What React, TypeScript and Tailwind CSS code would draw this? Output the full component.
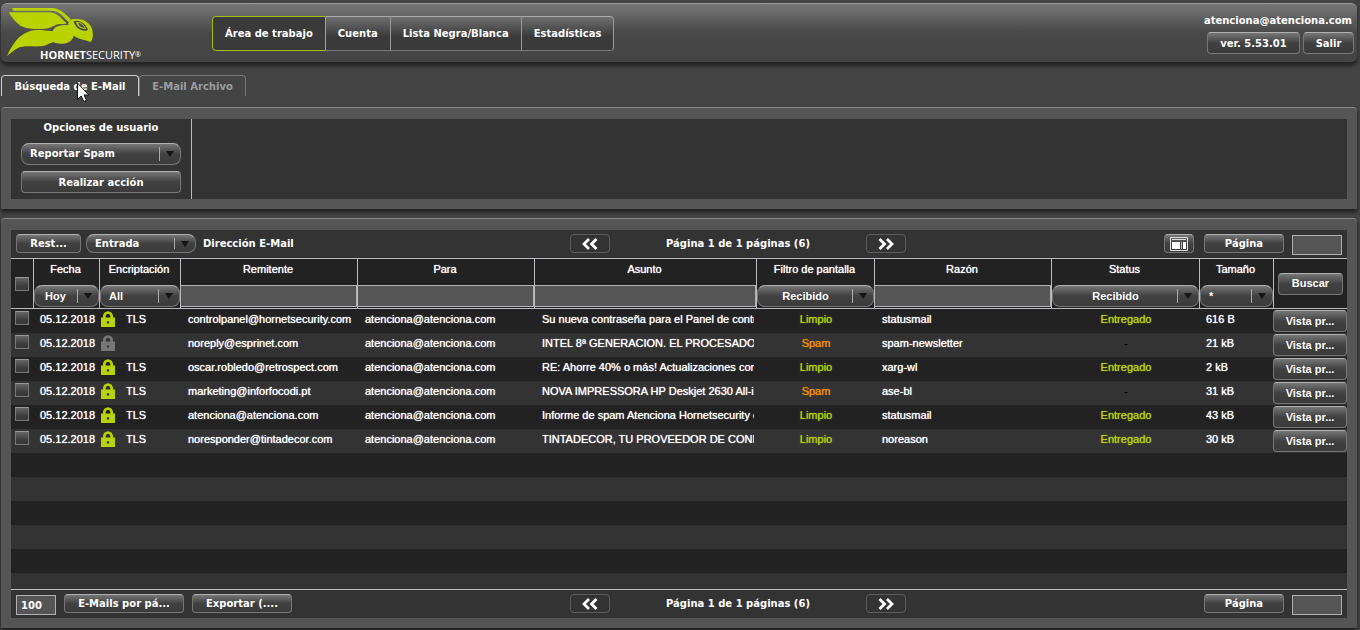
import type { ReactNode } from 'react';

type Mail = {
  tls: boolean;
  from: string;
  subject: string;
  filter: 'Limpio' | 'Spam';
  reason: string;
  delivered: boolean;
  size: string;
};

const mails: Mail[] = [
  { tls: true, from: 'controlpanel@hornetsecurity.com', subject: 'Su nueva contraseña para el Panel de contr', filter: 'Limpio', reason: 'statusmail', delivered: true, size: '616 B' },
  { tls: false, from: 'noreply@esprinet.com', subject: 'INTEL 8ª GENERACION. EL PROCESADO', filter: 'Spam', reason: 'spam-newsletter', delivered: false, size: '21 kB' },
  { tls: true, from: 'oscar.robledo@retrospect.com', subject: 'RE: Ahorre 40% o más! Actualizaciones con', filter: 'Limpio', reason: 'xarg-wl', delivered: true, size: '2 kB' },
  { tls: true, from: 'marketing@inforfocodi.pt', subject: 'NOVA IMPRESSORA HP Deskjet 2630 All-i', filter: 'Spam', reason: 'ase-bl', delivered: false, size: '31 kB' },
  { tls: true, from: 'atenciona@atenciona.com', subject: 'Informe de spam Atenciona Hornetsecurity e', filter: 'Limpio', reason: 'statusmail', delivered: true, size: '43 kB' },
  { tls: true, from: 'noresponder@tintadecor.com', subject: 'TINTADECOR, TU PROVEEDOR DE CONF', filter: 'Limpio', reason: 'noreason', delivered: true, size: '30 kB' },
];

const navItems = ['Cuenta', 'Lista Negra/Blanca', 'Estadísticas'];

const glossy =
  'rounded border border-[#777] border-t-[#b0b0b0] bg-linear-to-b from-[#777] via-[#414141] via-50% to-[#3b3b3b] font-bold text-white';
const arial = 'font-["Liberation_Sans",Arial,sans-serif] text-[11px]';
const field = 'border border-[#b0b2b4] bg-[#555] px-1 font-bold text-white outline-none';

function Button({ className, children, label }: { className: string; children: ReactNode; label?: string }) {
  return (
    <button type="button" aria-label={label} className={`${glossy} flex shrink-0 items-center justify-center whitespace-nowrap ${className}`}>
      {children}
    </button>
  );
}

type SelectProps = { label: string; value: string; className: string; textClass?: string };

function Select({ label, value, className, textClass = 'pl-2' }: SelectProps) {
  return (
    <div className={`relative shrink-0 ${className}`}>
      <select aria-label={label} className={`${glossy} block h-full w-full appearance-none rounded-lg pr-5 leading-none outline-none ${textClass}`}>
        <option>{value}</option>
      </select>
      <span className="pointer-events-none absolute inset-y-1 right-0 flex w-[22px] items-center border-l border-[#aaa] pl-1.5">
        <svg viewBox="0 0 8 6" className="h-1.5 w-2 fill-[#151515]">
          <path d="M0 0h8L4 6z" />
        </svg>
      </span>
    </div>
  );
}

function Checkbox({ label }: { label: string }) {
  return (
    <input
      type="checkbox"
      aria-label={label}
      className="block size-3.5 appearance-none border border-[#777] border-t-[#999] bg-linear-to-b from-[#666] to-[#3a3a3a] to-70%"
    />
  );
}

function Logo() {
  return (
    <svg viewBox="0 0 145 62" className="h-[62px] w-[145px]" role="img" aria-label="Hornetsecurity">
      <g transform="scale(.33333)" fill="#b8d300">
        <path d="M33 24H156C181 26 193 44 210 58L203 66C187 51 177 34 153 32H37Z" />
        <path d="M23 37H148C172 39 180 57 197 70C187 75 176 69 160 77C145 86 125 88 99 87C81 86 65 82 57 76C43 66 31 51 23 37Z" />
        <path d="M18 168C34 132 54 104 82 95C107 87 127 91 155 94C158 80 176 73 202 75C200 63 211 55 224 57C248 55 269 70 274 89C277 104 276 115 270 126C256 120 236 119 218 107C215 122 199 132 181 131C171 131 163 129 157 127C142 130 139 138 119 139C90 141 68 135 47 146C35 153 26 161 18 168Z" />
        <path d="M218 64C231 57 254 68 261 90C247 97 223 87 218 64Z" fill="#484848" />
        <path d="M225 67C236 62 250 73 255 87C242 88 228 80 225 67Z" />
        <path d="M231 69C241 69 248 77 251 84C240 83 233 77 231 69Z" fill="#525252" />
      </g>
      <text x="39" y="59" fill="#fff" fontSize="11" className='font-["Open_Sans",sans-serif]'>
        <tspan fontWeight="700">HORNET</tspan>
        <tspan fontWeight="400">SECURITY</tspan>
        <tspan fontWeight="400" fontSize="7" dy="-2">®</tspan>
      </text>
    </svg>
  );
}

function Lock({ active }: { active: boolean }) {
  return (
    <svg viewBox="0 0 14 16" className={`mt-0.5 h-4 w-3.5 shrink-0 ${active ? 'text-[#b8d300]' : 'text-[#777]'}`}>
      <path d="M3.300 8V5.400a3.700 3.900 0 0 1 7.400 0V8" fill="none" stroke="currentColor" strokeWidth="2.7" />
      <path d="M0 6.500h14V16H0z" fill="currentColor" />
      <circle cx="7" cy="11.500" r="1.200" fill="#333" />
    </svg>
  );
}

function Chevrons({ back }: { back?: boolean }) {
  return (
    <svg viewBox="0 0 16 12" className={`h-3 w-4 ${back ? 'rotate-180' : ''}`} fill="none" stroke="#fff" strokeWidth="2.8">
      <path d="M1.500 1l5 5-5 5M9 1l5 5-5 5" />
    </svg>
  );
}

function Pager() {
  return (
    <div className="flex items-start justify-between">
      <button type="button" aria-label="Anterior" className="flex h-[19px] w-10 items-center justify-center rounded border border-[#5c5c5c]">
        <Chevrons back />
      </button>
      <span className="leading-[19px]">Página 1 de 1 páginas (6)</span>
      <button type="button" aria-label="Siguiente" className="flex h-[19px] w-10 items-center justify-center rounded border border-[#5c5c5c]">
        <Chevrons />
      </button>
    </div>
  );
}

function Panel({ className, children }: { className: string; children: ReactNode }) {
  return (
    <section className={`rounded-t border-t border-[#888] bg-[#555] px-2.5 pt-[11px] pb-2.5 shadow-[0_3px_4px_#1c1c1c] ${className}`}>
      <div className="bg-[#333]">{children}</div>
    </section>
  );
}

function HeadCell({ title, children }: { title: string; children: ReactNode }) {
  return (
    <th scope="col" className="border-b border-l border-[#b8bcc0] p-0 align-top font-normal">
      <div className="pr-0.5 leading-5 [text-shadow:0_0_1px_currentColor]">{title}</div>
      <div className="mt-1.5">{children}</div>
    </th>
  );
}

function FilterInput({ label }: { label: string }) {
  return <input aria-label={label} className={`${field} block h-[22px] w-full border-l-0`} />;
}

function MailRow({ mail }: { mail: Mail }) {
  return (
    <tr className="h-6 odd:bg-[#222] even:bg-[#333]">
      <td className="p-0 pt-0.5 pl-1 align-top">
        <Checkbox label={`Seleccionar ${mail.from}`} />
      </td>
      <td className="p-0 pl-[7px] align-top">05.12.2018</td>
      <td className="p-0 pl-0.5 align-top">
        <div className="flex gap-[11px]">
          <Lock active={mail.tls} />
          {mail.tls && <span>TLS</span>}
        </div>
      </td>
      <td className="overflow-hidden p-0 pl-2 align-top">{mail.from}</td>
      <td className="overflow-hidden p-0 pl-2 align-top">atenciona@atenciona.com</td>
      <td className="p-0 pr-0.5 pl-2 align-top">
        <div className="overflow-hidden">{mail.subject}</div>
      </td>
      <td className={`p-0 pl-0.5 text-center align-top ${mail.filter === 'Spam' ? 'text-[#f09000]' : 'text-[#b8d300]'}`}>{mail.filter}</td>
      <td className="p-0 pl-2 align-top">{mail.reason}</td>
      <td className={`p-0 pl-0.5 text-center align-top ${mail.delivered ? 'text-[#b8d300]' : 'text-black'}`}>
        {mail.delivered ? 'Entregado' : '-'}
      </td>
      <td className="p-0 pl-[7px] align-top">{mail.size}</td>
      <td className="p-0 pt-px align-top">
        <Button className="h-[22px] w-full [text-shadow:none]">Vista pr...</Button>
      </td>
    </tr>
  );
}

function MailTable() {
  return (
    <table className={`w-full table-fixed border-separate border-spacing-0 border-y border-[#b8bcc0] font-normal text-white ${arial}`}>
      <colgroup>
        <col className="w-[22px]" />
        <col className="w-[66px]" />
        <col className="w-[81px]" />
        <col className="w-[177px]" />
        <col className="w-[177px]" />
        <col className="w-[222px]" />
        <col className="w-[118px]" />
        <col className="w-[177px]" />
        <col className="w-[148px]" />
        <col className="w-[74px]" />
        <col className="w-[74px]" />
      </colgroup>
      <thead className="bg-[#222]">
        <tr className="h-[50px]">
          <th className="border-b border-[#b8bcc0] p-0 pl-1">
            <Checkbox label="Seleccionar todo" />
          </th>
          <HeadCell title="Fecha">
            <Select label="Fecha" value="Hoy" className="h-[22px]" textClass="pl-2.5" />
          </HeadCell>
          <HeadCell title="Encriptación">
            <Select label="Encriptación" value="All" className="h-[22px]" />
          </HeadCell>
          <HeadCell title="Remitente">
            <FilterInput label="Remitente" />
          </HeadCell>
          <HeadCell title="Para">
            <FilterInput label="Para" />
          </HeadCell>
          <HeadCell title="Asunto">
            <FilterInput label="Asunto" />
          </HeadCell>
          <HeadCell title="Filtro de pantalla">
            <Select label="Filtro de pantalla" value="Recibido" className="h-[22px]" textClass="[text-align-last:center]" />
          </HeadCell>
          <HeadCell title="Razón">
            <FilterInput label="Razón" />
          </HeadCell>
          <HeadCell title="Status">
            <Select label="Status" value="Recibido" className="h-[22px]" textClass="[text-align-last:center]" />
          </HeadCell>
          <HeadCell title="Tamaño">
            <Select label="Tamaño" value="*" className="h-[22px]" />
          </HeadCell>
          <th className="border-b border-l border-[#b8bcc0] p-0 px-1">
            <Button className="h-[22px] w-full">Buscar</Button>
          </th>
        </tr>
      </thead>
      <tbody className="leading-5 whitespace-nowrap [text-shadow:0_0_1px_currentColor]">
        {mails.map((mail) => (
          <MailRow key={mail.from} mail={mail} />
        ))}
        {[24, 24, 24, 24, 24, 16].map((height, i) => (
          <tr key={i} className="odd:bg-[#222] even:bg-[#333]">
            <td colSpan={11} className="p-0" style={{ height }} />
          </tr>
        ))}
      </tbody>
    </table>
  );
}

export default function App() {
  return (
    <div className='min-h-screen overflow-hidden bg-[#444] pt-[3px] pr-[3px] pl-px font-["DejaVu_Sans",Verdana,sans-serif] text-[10px] font-bold text-white'>
      <header className="flex h-[59px] items-start rounded-md border-t border-[#999] bg-linear-to-b from-[#777] via-[#484848] via-50% to-[#444] shadow-[0_4px_4px_#222]">
        <div className="-mt-1 w-[211px]">
          <Logo />
        </div>
        <nav className="mt-3 flex h-[35px]">
          <button type="button" className="rounded-l border border-[#a5bd00] bg-[#3a3a3a] px-3">
            Área de trabajo
          </button>
          {navItems.map((item) => (
            <button
              key={item}
              type="button"
              className="border border-l-0 border-[#777] border-t-[#aaa] border-r-[#999] bg-linear-to-b from-[#707070] to-[#3a3a3a] to-60% px-3 last:rounded-r"
            >
              {item}
            </button>
          ))}
        </nav>
        <div className="mt-2.5 mr-[3px] ml-auto flex flex-col items-end gap-1">
          <span className="pr-0.5 leading-[14px]">atenciona@atenciona.com</span>
          <div className="flex gap-[3px]">
            <Button className="h-[22px] w-[93px]">ver. 5.53.01</Button>
            <Button className="h-[22px] w-[51px]">Salir</Button>
          </div>
        </div>
      </header>

      <nav className="mt-[13px] flex h-[21px]">
        <button type="button" className="relative w-[138px] rounded-t border border-b-0 border-[#ccc] bg-[#444]">
          Búsqueda de E-Mail
          <svg viewBox="0 0 12 20" className="absolute top-1.5 left-[75px] h-5 w-3">
            <path d="M.5 1v16.500l3.700-3.500 2.600 5.500 2.700-1.200-2.500-5.300h4.800z" fill="#fff" stroke="#111" />
          </svg>
        </button>
        <button type="button" className="w-[107px] rounded-t border border-b-0 border-[#777] text-[#999f9f]">
          E-Mail Archivo
        </button>
      </nav>

      <Panel className="mt-[11px]">
        <div className="flex w-[181px] flex-col border-r border-[#b8bcc0] px-2.5 pb-1.5 text-center">
          <h2 className="mb-1.5 leading-[18px]">Opciones de usuario</h2>
          <Select label="Opciones de usuario" value="Reportar Spam" className="mb-1.5 h-[22px]" />
          <Button className="h-[22px] w-full">Realizar acción</Button>
        </div>
      </Panel>

      <Panel className="mt-[9px]">
        <div className="grid h-7 grid-cols-[559fr_336px_441fr] pt-1">
          <div className="flex items-start gap-[5px] pl-[5px]">
            <Button className="h-[19px] w-[65px]">Rest...</Button>
            <Select label="Dirección" value="Entrada" className="h-[19px] w-[110px]" />
            <span className="pl-0.5 leading-[19px]">Dirección E-Mail</span>
          </div>
          <Pager />
          <div className="flex items-start justify-end pr-[5px]">
            <Button className="h-[19px] w-[30px]" label="Vista">
              <svg viewBox="0 0 18 14" className="h-3.5 w-[18px]" fill="none">
                <path d="M.5.5h17v13H.5z" stroke="#ddd" />
                <path d="M2 2.500h14" stroke="#ddd" />
                <path d="M2 5h8v7H2zM13 5h3v7h-3z" fill="#fff" />
                <path d="M11.500 5v7" stroke="#bbb" />
              </svg>
            </Button>
            <Button className="ml-2.5 h-[19px] w-20">Página</Button>
            <input aria-label="Número de página" className={`${field} mt-px ml-2 h-5 w-[50px]`} />
          </div>
        </div>
        <MailTable />
        <div className="grid h-7 grid-cols-[559fr_336px_441fr] pt-1">
          <div className="flex items-start gap-2 pl-[5px]">
            <input aria-label="E-Mails por página" defaultValue="100" className={`${field} mt-px h-5 w-10 px-0.5`} />
            <Button className="h-[19px] w-[120px]">E-Mails por pá...</Button>
            <Button className="h-[19px] w-[100px]">Exportar (....</Button>
          </div>
          <Pager />
          <div className="flex items-start justify-end gap-2 pr-[5px]">
            <Button className="h-[19px] w-20">Página</Button>
            <input aria-label="Ir a la página" className={`${field} mt-px h-5 w-[50px]`} />
          </div>
        </div>
      </Panel>
    </div>
  );
}
